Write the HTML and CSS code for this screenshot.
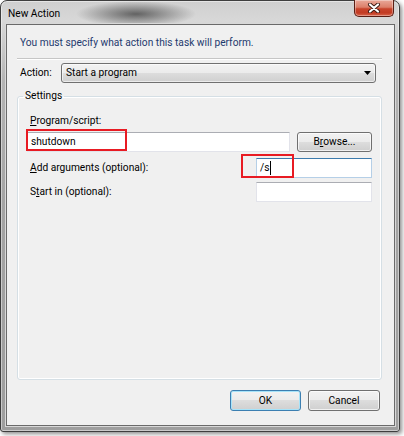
FILE: index.html
```html
<!DOCTYPE html>
<html>
<head>
<meta charset="utf-8">
<link rel="stylesheet" href="styles.css">
</head>
<body>
<div class="window">
  <div class="titlebar">
    <span class="title">New Action</span>
    <div class="close">
      <svg width="14" height="10" viewBox="0 0 14 10">
        <path d="M3 1.5 L11 8.5 M11 1.5 L3 8.5" stroke="#3a1a14" stroke-width="4" stroke-linecap="round" fill="none"/>
        <path d="M3 1.5 L11 8.5 M11 1.5 L3 8.5" stroke="#ffffff" stroke-width="2.2" stroke-linecap="round" fill="none"/>
      </svg>
    </div>
  </div>
  <div class="client">
    <p class="instruction">You must specify what action this task will perform.</p>
    <div class="sep"></div>
    <div class="action-row">
      <span class="action-label">Action:</span>
      <div class="combo">
        <span>Start a program</span>
        <svg width="7" height="4" viewBox="0 0 7 4"><path d="M0 0 H7 L3.5 4 Z" fill="#000"/></svg>
      </div>
    </div>
    <fieldset class="settings">
      <legend>Settings</legend>
      <div class="field-label"><u>P</u>rogram/script:</div>
      <div class="prog-row">
        <div class="textbox prog">shutdown</div>
        <div class="btn browse">B<u>r</u>owse...</div>
      </div>
      <div class="field-row args">
        <span class="row-label"><u>A</u>dd arguments (optional):</span>
        <div class="textbox small focused">/s<span class="caret"></span></div>
      </div>
      <div class="field-row start">
        <span class="row-label">S<u>t</u>art in (optional):</span>
        <div class="textbox small"></div>
      </div>
    </fieldset>
    <div class="buttons">
      <div class="btn ok">OK</div>
      <div class="btn cancel">Cancel</div>
    </div>
  </div>
  <div class="mark mark-prog"></div>
  <div class="mark mark-args"></div>
</div>
</body>
</html>
```
FILE: styles.css
```css
* { box-sizing: border-box; }
html, body { margin: 0; padding: 0; background: #ffffff; }
body {
  font-family: Roboto, "Liberation Sans", sans-serif;
  font-size: 10.2px;
  color: #000;
  width: 404px;
  height: 436px;
  overflow: hidden;
}
.window {
  position: relative;
  width: 400px;
  height: 432px;
  border: 1px solid #3e3e3e;
  border-radius: 7px 7px 3px 3px;
  background:
    radial-gradient(ellipse 60px 13px at 135px 13px, rgba(60,60,60,0.75), rgba(60,60,60,0) 100%),
    linear-gradient(to bottom, #cfcfcf 0, #d8d8d8 20px, #b4b4b4 80px, #a4a4a4 200px, #9e9e9e 100%);
  box-shadow: 2px 2px 4px rgba(0,0,0,0.45), inset 0 0 0 1px rgba(255,255,255,0.45);
  display: flex;
  flex-direction: column;
  padding: 0 5px 6px 6px;
}
.titlebar {
  height: 24px;
  display: flex;
  align-items: flex-start;
  justify-content: space-between;
}
.title {
  margin-top: 5px;
  margin-left: 1px;
  line-height: 16px;
  color: #000;
}
.close {
  width: 40px;
  height: 17px;
  margin-top: -1px;
  border: 1px solid #5a1e14;
  border-top: none;
  border-radius: 0 0 5px 5px;
  background: linear-gradient(to bottom, #e9a899 0, #dc7f6a 45%, #c8442c 55%, #c23b23 80%, #d9664c 100%);
  box-shadow: inset 0 0 0 1px rgba(255,255,255,0.35);
  display: flex;
  align-items: center;
  justify-content: center;
}
.client {
  flex: 1;
  background: #f0f0f0;
  box-shadow: 0 0 0 1px #6a6a6a, 0 0 0 2px #d8d8d8;
  display: flex;
  flex-direction: column;
  padding: 10px 12px 14px 10px;
}
.instruction {
  margin: 0 0 0 3px;
  line-height: 16px;
  color: #1e3a6e;
}
.sep {
  margin-top: 7px;
  border-top: 1px solid #c6c6c6;
  border-bottom: 1px solid #ffffff;
}
.action-row {
  margin-top: 3px;
  display: flex;
  align-items: center;
  padding: 0 6px 0 3px;
}
.action-label { width: 41px; line-height: 16px; }
.combo {
  flex: 1;
  height: 20px;
  border: 1px solid #707070;
  border-radius: 3px;
  background: linear-gradient(to bottom, #f2f2f2 0, #ebebeb 50%, #dddddd 50%, #cfcfcf 100%);
  box-shadow: inset 0 0 0 1px rgba(255,255,255,0.6);
  display: flex;
  align-items: center;
  justify-content: space-between;
  padding: 0 4px 0 4px;
  line-height: 16px;
}
.settings {
  flex: 1;
  margin: 5px 0 0 0;
  padding: 9px 9px 0 9px;
  border: 1px solid #d5dfe5;
  border-radius: 3px;
  box-shadow: inset 0 0 0 1px #ffffff;
  min-width: 0;
}
.settings legend {
  padding: 0 2px;
  margin-left: -4px;
  line-height: 16px;
}
.field-label {
  padding-left: 3px;
  line-height: 16px;
}
.prog-row {
  margin-top: 3px;
  display: flex;
  align-items: center;
  gap: 7px;
}
.textbox {
  height: 20px;
  background: #ffffff;
  border: 1px solid #e2e3ea;
  border-top-color: #abadb3;
  padding: 0 3px;
  line-height: 18px;
  display: flex;
  align-items: center;
}
.textbox.prog { width: 263px; }
.textbox.small { width: 116px; margin-left: auto; }
.textbox.focused {
  border-color: #b5cfe7;
  border-top-color: #3d7bad;
}
.caret {
  display: inline-block;
  width: 1px;
  height: 14px;
  background: #000;
  margin-left: 1px;
}
.btn {
  height: 20px;
  border: 1px solid #707070;
  border-radius: 3px;
  background: linear-gradient(to bottom, #f2f2f2 0, #ebebeb 50%, #dddddd 50%, #cfcfcf 100%);
  box-shadow: inset 0 0 0 1px rgba(255,255,255,0.7);
  display: flex;
  align-items: center;
  justify-content: center;
  line-height: 16px;
}
.btn.browse { width: 75px; }
.field-row {
  display: flex;
  align-items: center;
  padding-left: 3px;
}
.field-row.args { margin-top: 6px; }
.field-row.start { margin-top: 4px; }
.row-label { line-height: 16px; }
.buttons {
  margin-top: 10px;
  display: flex;
  justify-content: flex-end;
  gap: 7px;
  padding-right: 2px;
}
.btn.ok, .btn.cancel { height: 21px; }
.btn.ok {
  width: 71px;
  border-color: #3c7fb1;
  box-shadow: inset 0 0 0 1px #a7e3f9;
}
.btn.cancel { width: 72px; }
.mark {
  position: absolute;
  border: 2px solid #e81b23;
}
.mark-prog { left: 25px; top: 128px; width: 101px; height: 22px; }
.mark-args { left: 240px; top: 153px; width: 53px; height: 24px; }
```
